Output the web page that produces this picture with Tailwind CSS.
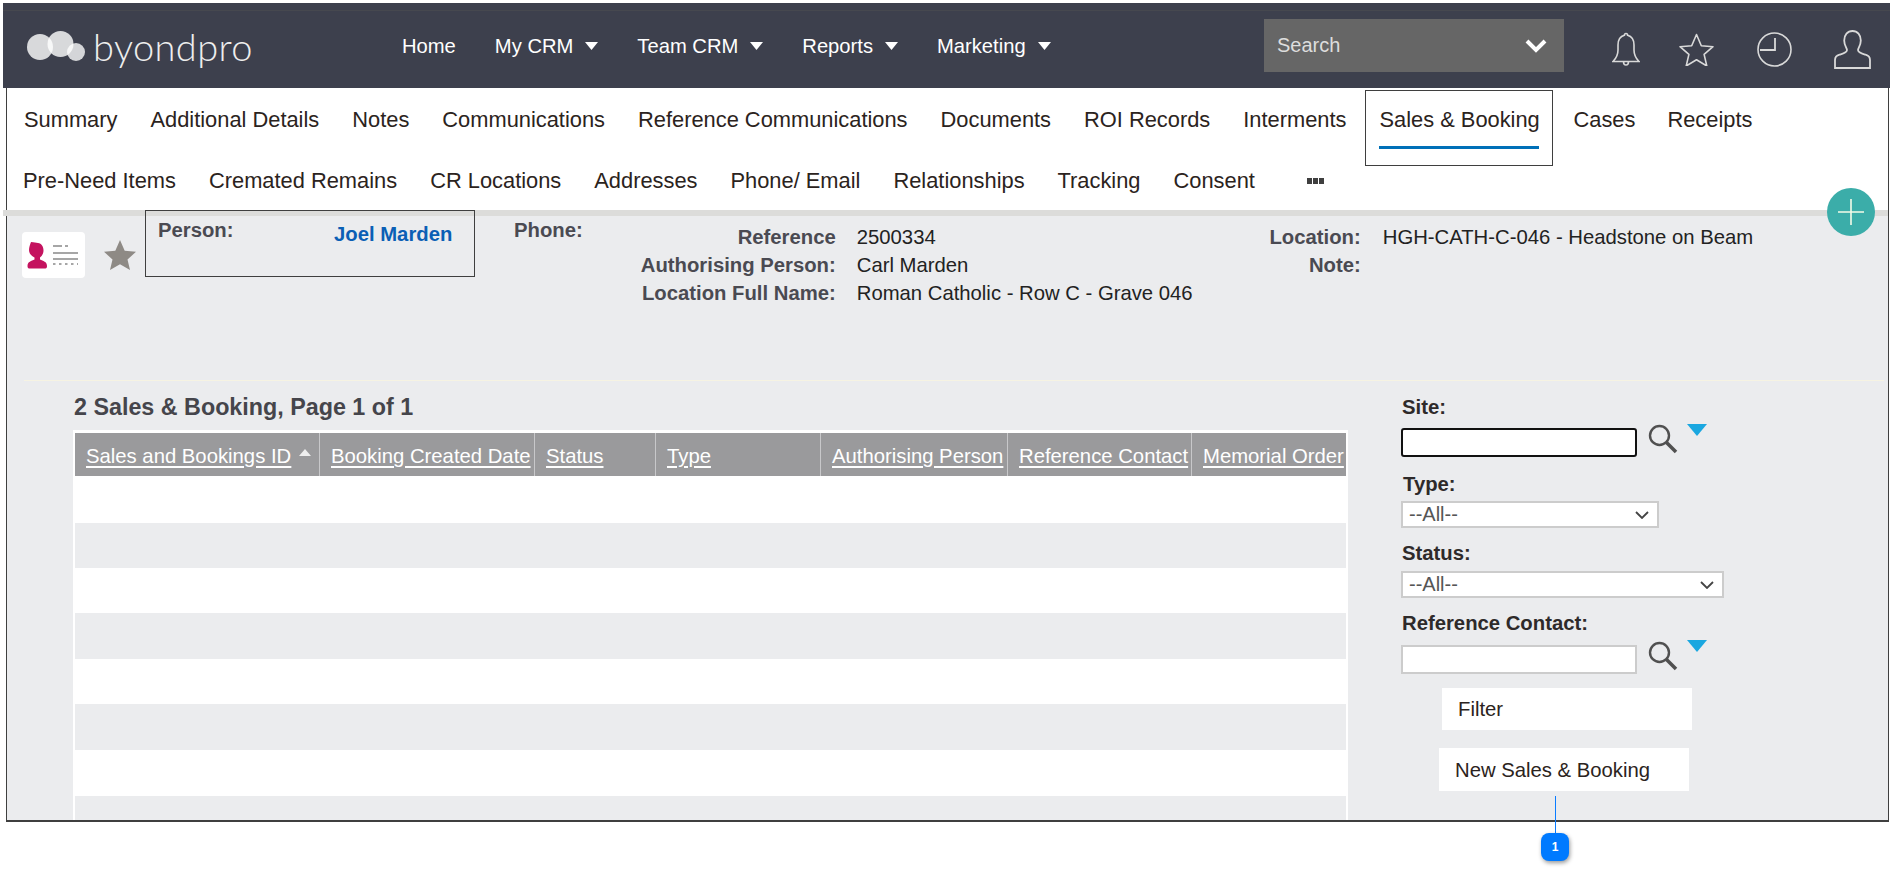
<!DOCTYPE html>
<html lang="en">
<head>
    <meta charset="UTF-8">
    <script src="https://cdn.jsdelivr.net/npm/@tailwindcss/browser@4"></script>
    <title>byondpro - Sales &amp; Booking</title>
</head>
<body class="bg-white font-['Liberation_Sans',Arial,sans-serif]">
<div class="relative w-[1893px] h-[882px] overflow-hidden pt-[3px]">

    <!-- top bar -->
    <header class="mx-[3px] h-[85px] bg-[#3d404d] flex flex-col">
        <div class="h-[8px] border-b border-[#46484f]"></div>
        <div class="flex items-start">
            <div class="flex items-center w-[399px] pl-[24px] pt-[15px]">
                <svg class="w-[60px] h-[32px] shrink-0" viewBox="0 0 60 32">
                    <circle cx="13" cy="17" r="13" fill="#fff" opacity=".8"/>
                    <circle cx="33.500" cy="14" r="13" fill="#fff" opacity=".8"/>
                    <circle cx="49" cy="22" r="9" fill="#fff" opacity=".78"/>
                </svg>
                <span class="ml-[6px] font-['Lato',sans-serif] font-light text-[38px] leading-[40px] tracking-[0.4px] text-[#eeeeee]">byondpro</span>
            </div>
            <nav class="flex items-center text-[20.2px] leading-[24px] text-white mt-[23px] w-[862px]">
                <a class="mr-[39px]">Home</a>
                <a class="flex items-center mr-[39px]">My CRM<svg class="ml-[12px] w-[13px] h-[8px]" viewBox="0 0 13 8"><path d="M0 0h13L6.500 8z" fill="#fff"/></svg></a>
                <a class="flex items-center mr-[39px]">Team CRM<svg class="ml-[12px] w-[13px] h-[8px]" viewBox="0 0 13 8"><path d="M0 0h13L6.500 8z" fill="#fff"/></svg></a>
                <a class="flex items-center mr-[39px]">Reports<svg class="ml-[12px] w-[13px] h-[8px]" viewBox="0 0 13 8"><path d="M0 0h13L6.500 8z" fill="#fff"/></svg></a>
                <a class="flex items-center">Marketing<svg class="ml-[12px] w-[13px] h-[8px]" viewBox="0 0 13 8"><path d="M0 0h13L6.500 8z" fill="#fff"/></svg></a>
            </nav>
            <div class="w-[300px] h-[53px] mt-[8px] bg-[#666666] flex items-center justify-between pl-[13px] pr-[17px] text-[20px] text-[#dddddd]">
                <span class="-mt-[2px]">Search</span>
                <svg class="w-[22px] h-[15px] -mt-[1px]" viewBox="0 0 22 15"><path d="M2 3l9 9 9-9" fill="none" stroke="#fff" stroke-width="4"/></svg>
            </div>
            <div class="flex items-start text-[#d9d9d9]">
                <!-- bell -->
                <svg class="ml-[48px] mt-[21px] w-[28px] h-[34px]" viewBox="0 0 28 34" fill="none" stroke="currentColor" stroke-width="1.600">
                    <path d="M14 1.500c-1 0-1.600.7-1.600 1.800C8 4.500 6 8 6 13v5c0 4.500-1.500 8-5 11.500h26c-3.500-3.500-5-7-5-11.500v-5c0-5-2-8.500-6.400-9.700 0-1.100-.6-1.800-1.600-1.800z"/>
                    <path d="M11.500 29.500c0 2.400 1 3.500 2.500 3.500s2.500-1.100 2.500-3.500"/>
                </svg>
                <!-- star -->
                <svg class="ml-[39px] mt-[22px] w-[35px] h-[33px]" viewBox="0 0 35 33" fill="none" stroke="currentColor" stroke-width="1.600" stroke-linejoin="round">
                    <path d="M17.500 1.500l4.800 11.200 11.700 1-8.900 7.700 2.700 11.600-10.300-6.200-10.300 6.200 2.700-11.600L1 13.700l11.700-1z"/>
                </svg>
                <!-- clock -->
                <svg class="ml-[43px] mt-[21px] w-[35px] h-[35px]" viewBox="0 0 35 35" fill="none" stroke="currentColor" stroke-width="1.600">
                    <circle cx="17.500" cy="17.500" r="16.500"/>
                    <path d="M18 6v12H3" stroke-width="1.800"/>
                </svg>
                <!-- person -->
                <svg class="ml-[42px] mt-[19px] w-[37px] h-[39px]" viewBox="0 0 37 39" fill="none" stroke="currentColor" stroke-width="1.800">
                    <path d="M1 38h35v-8c0-3-1.500-4.500-4.500-5.300-3.500-1-7.500-2-7.500-4.700 0-2 2.800-4.500 2.800-9.500C26.800 5 23.500 1 18.500 1S10.200 5 10.200 10.500c0 5 2.800 7.500 2.800 9.500 0 2.700-4 3.700-7.500 4.700C2.500 25.500 1 27 1 30z"/>
                </svg>
            </div>
        </div>
    </header>

    <!-- framed page -->
    <div class="relative ml-[6px] w-[1883px] h-[734px] border-x border-b-2 border-[#3f3f3f] flex flex-col">
        <!-- tabs -->
        <div class="h-[122px] shrink-0 text-[21.85px] leading-[26px] text-[#2b2320]">
            <div class="flex pt-[19px] pl-[17px]">
                <a class="mr-[33px]">Summary</a>
                <a class="mr-[33px]">Additional Details</a>
                <a class="mr-[33px]">Notes</a>
                <a class="mr-[33px]">Communications</a>
                <a class="mr-[33px]">Reference Communications</a>
                <a class="mr-[33px]">Documents</a>
                <a class="mr-[33px]">ROI Records</a>
                <a class="mr-[19px]">Interments</a>
                <a class="-mt-[17px] h-[76px] w-[188px] mr-[20px] border border-[#3f3f3f] px-[13px] pt-[16px] whitespace-nowrap">
                    Sales &amp; Booking
                    <span class="block mt-[13px] h-[3px] bg-[#0070b8]"></span>
                </a>
                <a class="mr-[32px]">Cases</a>
                <a>Receipts</a>
            </div>
            <div class="flex pt-[2px] pl-[16px]">
                <a class="mr-[33px]">Pre-Need Items</a>
                <a class="mr-[33px]">Cremated Remains</a>
                <a class="mr-[33px]">CR Locations</a>
                <a class="mr-[33px]">Addresses</a>
                <a class="mr-[33px]">Phone/ Email</a>
                <a class="mr-[33px]">Relationships</a>
                <a class="mr-[33px]">Tracking</a>
                <a class="mr-[52px]">Consent</a>
                <span class="flex gap-[1px] items-center">
                    <i class="w-[5px] h-[6px] bg-[#3f3f3f]"></i><i class="w-[5px] h-[6px] bg-[#3f3f3f]"></i><i class="w-[5px] h-[6px] bg-[#3f3f3f]"></i>
                </span>
            </div>
        </div>
        <div class="h-[6px] -ml-[4px] shrink-0 bg-[#dcdcda]"></div>

        <!-- add button -->
        <button class="absolute left-[1820px] top-[100px] w-[48px] h-[48px] rounded-full bg-[#3bada9] flex items-center justify-center">
            <svg class="w-[26px] h-[26px]" viewBox="0 0 26 26"><path d="M13 0v26M0 13h26" stroke="#f4fbe8" stroke-width="1.600"/></svg>
        </button>

        <!-- person details + list -->
        <div class="grow bg-[#ebecee] min-h-0 flex flex-col text-[20.3px] leading-[28px]">
            <div class="h-[164px] shrink-0 flex items-start">
                <div class="ml-[15px] mt-[16px] w-[63px] h-[46px] bg-white rounded-[4px] shrink-0">
                    <svg class="w-[63px] h-[46px]" viewBox="0 0 63 46">
                        <path d="M9 10c3 .5 5 .6 7 1 3.500.6 5.500 3.500 5.500 7.500 0 3-1.500 5.500-3.500 7v2c3 1.500 7 2 7 6.500 0 1.500-.5 2.500-1.500 2.500H7c-1 0-1.500-1-1.500-2.500 0-4.500 4-5 7-6.500v-2c-3-1.500-5.500-4-5.500-7.500 0-3 1-5 2-8z" fill="#c4135f"/>
                        <path d="M31 14h9M43 14h3M31 21h25M31 27h25" stroke="#a6a6a6" stroke-width="2"/>
                        <path d="M31 32h25" stroke="#a6a6a6" stroke-width="2" stroke-dasharray="2.500 3.500"/>
                    </svg>
                </div>
                <svg class="ml-[19px] mt-[24px] w-[32px] h-[30px] shrink-0" viewBox="0 0 32 30"><path d="M16 0l4.700 10.800L32 11.800l-8.500 7.700L26 30 16 24.300 6 30l2.500-10.500L0 11.800l11.300-1z" fill="#8e8a85"/></svg>
                <div class="-mt-[6px] ml-[9px] w-[330px] h-[67px] shrink-0 border border-[#3f3f3f] flex font-bold pl-[12px]">
                    <span class="text-[#4a4a52] pt-[5px] w-[176px]">Person:</span>
                    <a class="text-[#0b5fb5] pt-[9px]">Joel Marden</a>
                </div>
                <span class="ml-[39px] font-bold text-[#4a4a52]">Phone:</span>
                <div class="ml-[-32px] mt-[7px] w-[285px] text-right font-bold text-[#4a4a52] shrink-0">
                    <div>Reference</div>
                    <div>Authorising Person:</div>
                    <div>Location Full Name:</div>
                </div>
                <div class="ml-[21px] mt-[7px] w-[404px] text-[#222222] shrink-0">
                    <div>2500334</div>
                    <div>Carl Marden</div>
                    <div>Roman Catholic - Row C - Grave 046</div>
                </div>
                <div class="w-[100px] mt-[7px] font-bold text-[#4a4a52] text-right">
                    <div>Location:</div>
                    <div>Note:</div>
                </div>
                <div class="ml-[22px] mt-[7px] text-[#222222]">HGH-CATH-C-046 - Headstone on Beam</div>
            </div>
            <div class="ml-[17px] mr-[4px] h-px shrink-0 bg-[#f6f3e2]"></div>

            <div class="grow min-h-0 flex overflow-hidden">
                <!-- table -->
                <div class="ml-[66px] w-[1275px] shrink-0">
                    <h2 class="h-[49px] pt-[12px] ml-[1px] font-bold text-[23.3px] leading-[28px] text-[#45454b]">2 Sales &amp; Booking, Page 1 of 1</h2>
                    <div class="bg-white pt-[3px] px-[2px]">
                        <div class="flex h-[43px] bg-[#9a9a9c] text-white text-[20.3px] leading-[46px] underline underline-offset-[3px]">
                            <span class="w-[245px] pl-[11px] border-r border-[#c8c8ca] flex no-underline"><u>Sales and Bookings ID</u><svg class="ml-[8px] mt-[16px] w-[12px] h-[7px]" viewBox="0 0 12 7"><path d="M6 0l6 7H0z" fill="#eee"/></svg></span>
                            <span class="w-[215px] pl-[11px] border-r border-[#c8c8ca] whitespace-nowrap">Booking Created Date</span>
                            <span class="w-[121px] pl-[11px] border-r border-[#c8c8ca]">Status</span>
                            <span class="w-[165px] pl-[11px] border-r border-[#c8c8ca]">Type</span>
                            <span class="w-[187px] pl-[11px] border-r border-[#c8c8ca] whitespace-nowrap">Authorising Person</span>
                            <span class="w-[184px] pl-[11px] border-r border-[#c8c8ca] whitespace-nowrap">Reference Contact</span>
                            <span class="pl-[11px] whitespace-nowrap">Memorial Order</span>
                        </div>
                        <div class="h-[47px]"></div>
                        <div class="h-[45px] bg-[#ebecee]"></div>
                        <div class="h-[45px]"></div>
                        <div class="h-[46px] bg-[#ebecee]"></div>
                        <div class="h-[45px]"></div>
                        <div class="h-[46px] bg-[#ebecee]"></div>
                        <div class="h-[46px]"></div>
                        <div class="h-[46px] bg-[#ebecee]"></div>
                    </div>
                </div>

                <!-- filter -->
                <div class="ml-[53px] w-[330px] shrink-0 text-[#2e2a2a] leading-[24px]">
                    <label class="block mt-[14px] ml-[1px] font-bold">Site:</label>
                    <div class="flex items-start mt-[9px]">
                        <input class="w-[236px] h-[29px] bg-white border-2 border-[#111] rounded-[3px]">
                        <svg class="ml-[11px] -mt-[4px] w-[30px] h-[30px]" viewBox="0 0 30 30" fill="none" stroke="#505050"><circle cx="11.500" cy="11.500" r="9.500" stroke-width="2.400"/><path d="M18.500 18.500L28 28" stroke-width="3.600"/></svg>
                        <svg class="ml-[9px] -mt-[4px] w-[20px] h-[12px]" viewBox="0 0 20 12"><path d="M0 0h20L10 12z" fill="#1aa7e0"/></svg>
                    </div>
                    <label class="block mt-[15px] ml-[2px] font-bold">Type:</label>
                    <div class="relative mt-[5px] w-[258px]">
                        <select class="block w-full h-[27px] appearance-none bg-white border-2 border-[#cccccc] pl-[6px] text-[20px] leading-[23px] text-[#555]"><option>--All--</option></select>
                        <svg class="absolute right-[10px] top-[10px] w-[14px] h-[8px]" viewBox="0 0 14 8"><path d="M1 1l6 6 6-6" fill="none" stroke="#444" stroke-width="1.800"/></svg>
                    </div>
                    <label class="block mt-[13px] ml-[1px] font-bold">Status:</label>
                    <div class="relative mt-[6px] w-[323px]">
                        <select class="block w-full h-[27px] appearance-none bg-white border-2 border-[#cccccc] pl-[6px] text-[20px] leading-[23px] text-[#555]"><option>--All--</option></select>
                        <svg class="absolute right-[10px] top-[10px] w-[14px] h-[8px]" viewBox="0 0 14 8"><path d="M1 1l6 6 6-6" fill="none" stroke="#444" stroke-width="1.800"/></svg>
                    </div>
                    <label class="block mt-[13px] ml-[1px] font-bold">Reference Contact:</label>
                    <div class="flex items-start mt-[10px]">
                        <input class="w-[236px] h-[29px] bg-white border-2 border-[#cccccc]">
                        <svg class="ml-[11px] -mt-[4px] w-[30px] h-[30px]" viewBox="0 0 30 30" fill="none" stroke="#505050"><circle cx="11.500" cy="11.500" r="9.500" stroke-width="2.400"/><path d="M18.500 18.500L28 28" stroke-width="3.600"/></svg>
                        <svg class="ml-[9px] -mt-[5px] w-[20px] h-[12px]" viewBox="0 0 20 12"><path d="M0 0h20L10 12z" fill="#1aa7e0"/></svg>
                    </div>
                    <button class="block mt-[14px] ml-[41px] w-[250px] h-[42px] bg-white text-left pl-[16px] text-[#2b2320]">Filter</button>
                    <button class="block mt-[18px] ml-[38px] w-[250px] h-[43px] bg-white text-left pl-[16px] text-[#2b2320]">New Sales &amp; Booking</button>
                </div>
            </div>
        </div>
    </div>

    <!-- callout -->
    <div class="absolute left-[1555px] top-[796px] w-px h-[37px] bg-[#0a7cff]"></div>
    <div class="absolute left-[1541px] top-[833px] w-[28px] h-[28px] rounded-[8px] bg-[#007aff] shadow-[1px_2px_4px_rgba(0,0,0,0.4)] flex items-center justify-center text-white font-bold text-[12px]">1</div>
</div>
</body>
</html>
